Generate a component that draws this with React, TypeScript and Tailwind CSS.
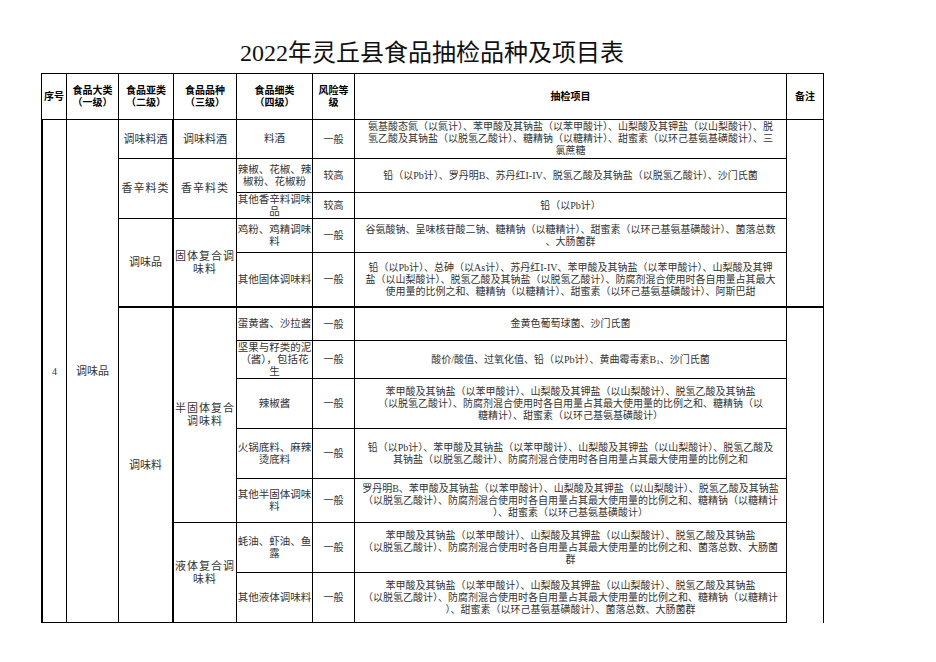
import React from 'react';

type Detail = {
  row: string;
  kind: string[];
  risk: string;
  items: React.ReactNode[];
  last?: boolean;
};

const Lines: React.FC<{ lines: React.ReactNode[] }> = ({ lines }) => (
  <>
    {lines.map((l, i) => (
      <React.Fragment key={i}>
        {i > 0 && <br />}
        {l}
      </React.Fragment>
    ))}
  </>
);

const cell = 'flex items-center justify-center text-center whitespace-nowrap border-r border-b border-black';

const details: Detail[] = [
  {
    row: 'row-start-2',
    kind: ['料酒'],
    risk: '一般',
    items: [
      '氨基酸态氮（以氮计）、苯甲酸及其钠盐（以苯甲酸计）、山梨酸及其钾盐（以山梨酸计）、脱',
      '氢乙酸及其钠盐（以脱氢乙酸计）、糖精钠（以糖精计）、甜蜜素（以环己基氨基磺酸计）、三',
      '氯蔗糖',
    ],
  },
  {
    row: 'row-start-3',
    kind: ['辣椒、花椒、辣', '椒粉、花椒粉'],
    risk: '较高',
    items: ['铅（以Pb计）、罗丹明B、苏丹红I-IV、脱氢乙酸及其钠盐（以脱氢乙酸计）、沙门氏菌'],
  },
  {
    row: 'row-start-4',
    kind: ['其他香辛料调味', '品'],
    risk: '较高',
    items: ['铅（以Pb计）'],
  },
  {
    row: 'row-start-5',
    kind: ['鸡粉、鸡精调味', '料'],
    risk: '一般',
    items: [
      '谷氨酸钠、呈味核苷酸二钠、糖精钠（以糖精计）、甜蜜素（以环己基氨基磺酸计）、菌落总数',
      '、大肠菌群',
    ],
  },
  {
    row: 'row-start-6',
    kind: ['其他固体调味料'],
    risk: '一般',
    items: [
      '铅（以Pb计）、总砷（以As计）、苏丹红I-IV、苯甲酸及其钠盐（以苯甲酸计）、山梨酸及其钾',
      '盐（以山梨酸计）、脱氢乙酸及其钠盐（以脱氢乙酸计）、防腐剂混合使用时各自用量占其最大',
      '使用量的比例之和、糖精钠（以糖精计）、甜蜜素（以环己基氨基磺酸计）、阿斯巴甜',
    ],
    last: true,
  },
  {
    row: 'row-start-7',
    kind: ['蛋黄酱、沙拉酱'],
    risk: '一般',
    items: ['金黄色葡萄球菌、沙门氏菌'],
  },
  {
    row: 'row-start-8',
    kind: ['坚果与籽类的泥', '（酱），包括花', '生'],
    risk: '一般',
    items: [
      <>
        酸价/酸值、过氧化值、铅（以Pb计）、黄曲霉毒素B<sub className="text-[7px] leading-none">1</sub>、沙门氏菌
      </>,
    ],
  },
  {
    row: 'row-start-9',
    kind: ['辣椒酱'],
    risk: '一般',
    items: [
      '苯甲酸及其钠盐（以苯甲酸计）、山梨酸及其钾盐（以山梨酸计）、脱氢乙酸及其钠盐',
      '（以脱氢乙酸计）、防腐剂混合使用时各自用量占其最大使用量的比例之和、糖精钠（以',
      '糖精计）、甜蜜素（以环己基氨基磺酸计）',
    ],
  },
  {
    row: 'row-start-10',
    kind: ['火锅底料、麻辣', '烫底料'],
    risk: '一般',
    items: [
      '铅（以Pb计）、苯甲酸及其钠盐（以苯甲酸计）、山梨酸及其钾盐（以山梨酸计）、脱氢乙酸及',
      '其钠盐（以脱氢乙酸计）、防腐剂混合使用时各自用量占其最大使用量的比例之和',
    ],
  },
  {
    row: 'row-start-11',
    kind: ['其他半固体调味', '料'],
    risk: '一般',
    items: [
      '罗丹明B、苯甲酸及其钠盐（以苯甲酸计）、山梨酸及其钾盐（以山梨酸计）、脱氢乙酸及其钠盐',
      '（以脱氢乙酸计）、防腐剂混合使用时各自用量占其最大使用量的比例之和、糖精钠（以糖精计',
      '）、甜蜜素（以环己基氨基磺酸计）',
    ],
  },
  {
    row: 'row-start-12',
    kind: ['蚝油、虾油、鱼', '露'],
    risk: '一般',
    items: [
      '苯甲酸及其钠盐（以苯甲酸计）、山梨酸及其钾盐（以山梨酸计）、脱氢乙酸及其钠盐',
      '（以脱氢乙酸计）、防腐剂混合使用时各自用量占其最大使用量的比例之和、菌落总数、大肠菌',
      '群',
    ],
  },
  {
    row: 'row-start-13',
    kind: ['其他液体调味料'],
    risk: '一般',
    items: [
      '苯甲酸及其钠盐（以苯甲酸计）、山梨酸及其钾盐（以山梨酸计）、脱氢乙酸及其钠盐',
      '（以脱氢乙酸计）、防腐剂混合使用时各自用量占其最大使用量的比例之和、糖精钠（以糖精计',
      '）、甜蜜素（以环己基氨基磺酸计）、菌落总数、大肠菌群',
    ],
  },
];

const headers: { col: string; lines: string[] }[] = [
  { col: 'col-start-1 border-l', lines: ['序号'] },
  { col: 'col-start-2', lines: ['食品大类', '（一级）'] },
  { col: 'col-start-3', lines: ['食品亚类', '（二级）'] },
  { col: 'col-start-4', lines: ['食品品种', '（三级）'] },
  { col: 'col-start-5', lines: ['食品细类', '（四级）'] },
  { col: 'col-start-6', lines: ['风险等', '级'] },
  { col: 'col-start-7', lines: ['抽检项目'] },
  { col: 'col-start-8', lines: ['备注'] },
];

export default function App() {
  const body = 'text-[#333] font-["Liberation_Serif","Noto_Sans_CJK_SC",serif]';
  return (
    <div className="min-h-screen w-full bg-white pt-[36px]">
      <div className="ml-[41px] flex h-[34px] w-[782px] items-center justify-center text-[24px] font-normal text-[#111] font-['Liberation_Serif','Noto_Sans_CJK_SC',serif]">
        2022年灵丘县食品抽检品种及项目表
      </div>

      <div className="ml-[41px] mt-[3px] grid w-fit grid-cols-[26px_52px_55px_63px_76px_42px_432px_37px] grid-rows-[46px_39px_34px_26px_34px_55px_33px_38px_50px_50px_44px_50px_50px] border-t border-black">
        {headers.map((h) => (
          <div
            key={h.lines[0]}
            className={`${cell} row-start-1 ${h.col} text-[10px] leading-[12px] font-semibold text-black font-['Liberation_Sans','Noto_Sans_CJK_SC',sans-serif]`}
          >
            <div>
              <Lines lines={h.lines} />
            </div>
          </div>
        ))}

        {/* 序号 / 大类 */}
        <div className={`${cell} ${body} col-start-1 row-start-2 row-span-12 border-l-2 text-[10px]`}>4</div>
        <div className={`${cell} ${body} col-start-2 row-start-2 row-span-12 text-[11px]`}>调味品</div>

        {/* 亚类 */}
        <div className={`${cell} ${body} col-start-3 row-start-2 border-r-2 text-[11px]`}>调味料酒</div>
        <div className={`${cell} ${body} col-start-3 row-start-3 row-span-2 border-r-2 text-[11px] tracking-[1px]`}>香辛料类</div>
        <div className={`${cell} ${body} col-start-3 row-start-5 row-span-2 border-r-2 border-b-2 text-[11px]`}>调味品</div>
        <div className={`${cell} ${body} col-start-3 row-start-7 row-span-7 border-r-2 text-[11px]`}>调味料</div>

        {/* 品种 */}
        <div className={`${cell} ${body} col-start-4 row-start-2 text-[11px]`}>调味料酒</div>
        <div className={`${cell} ${body} col-start-4 row-start-3 row-span-2 text-[11px] tracking-[1px]`}>香辛料类</div>
        <div className={`${cell} ${body} col-start-4 row-start-5 row-span-2 border-b-2 text-[11px] leading-[13px] tracking-[1px]`}>
          <div>固体复合调<br />味料</div>
        </div>
        <div className={`${cell} ${body} col-start-4 row-start-7 row-span-5 text-[11px] leading-[13px] tracking-[1px]`}>
          <div>半固体复合<br />调味料</div>
        </div>
        <div className={`${cell} ${body} col-start-4 row-start-12 row-span-2 text-[11px] leading-[13px] tracking-[1px]`}>
          <div>液体复合调<br />味料</div>
        </div>

        {/* 细类 / 风险 / 项目 */}
        {details.map((d) => (
          <React.Fragment key={d.row}>
            <div className={`${cell} ${body} col-start-5 ${d.row} ${d.last ? 'border-b-2' : ''} text-[10.5px] leading-[12px]`}>
              <div>
                <Lines lines={d.kind} />
              </div>
            </div>
            <div className={`${cell} ${body} col-start-6 ${d.row} ${d.last ? 'border-b-2' : ''} text-[10px]`}>{d.risk}</div>
            <div className={`${cell} ${body} col-start-7 ${d.row} ${d.last ? 'border-b-2' : ''} text-[10px] leading-[12px]`}>
              <div>
                <Lines lines={d.items} />
              </div>
            </div>
          </React.Fragment>
        ))}

        {/* 备注 */}
        <div className={`${cell} col-start-8 row-start-2 row-span-5 border-b-2`} />
        <div className="col-start-8 row-start-7 row-span-7 border-r border-black" />
      </div>
    </div>
  );
}
